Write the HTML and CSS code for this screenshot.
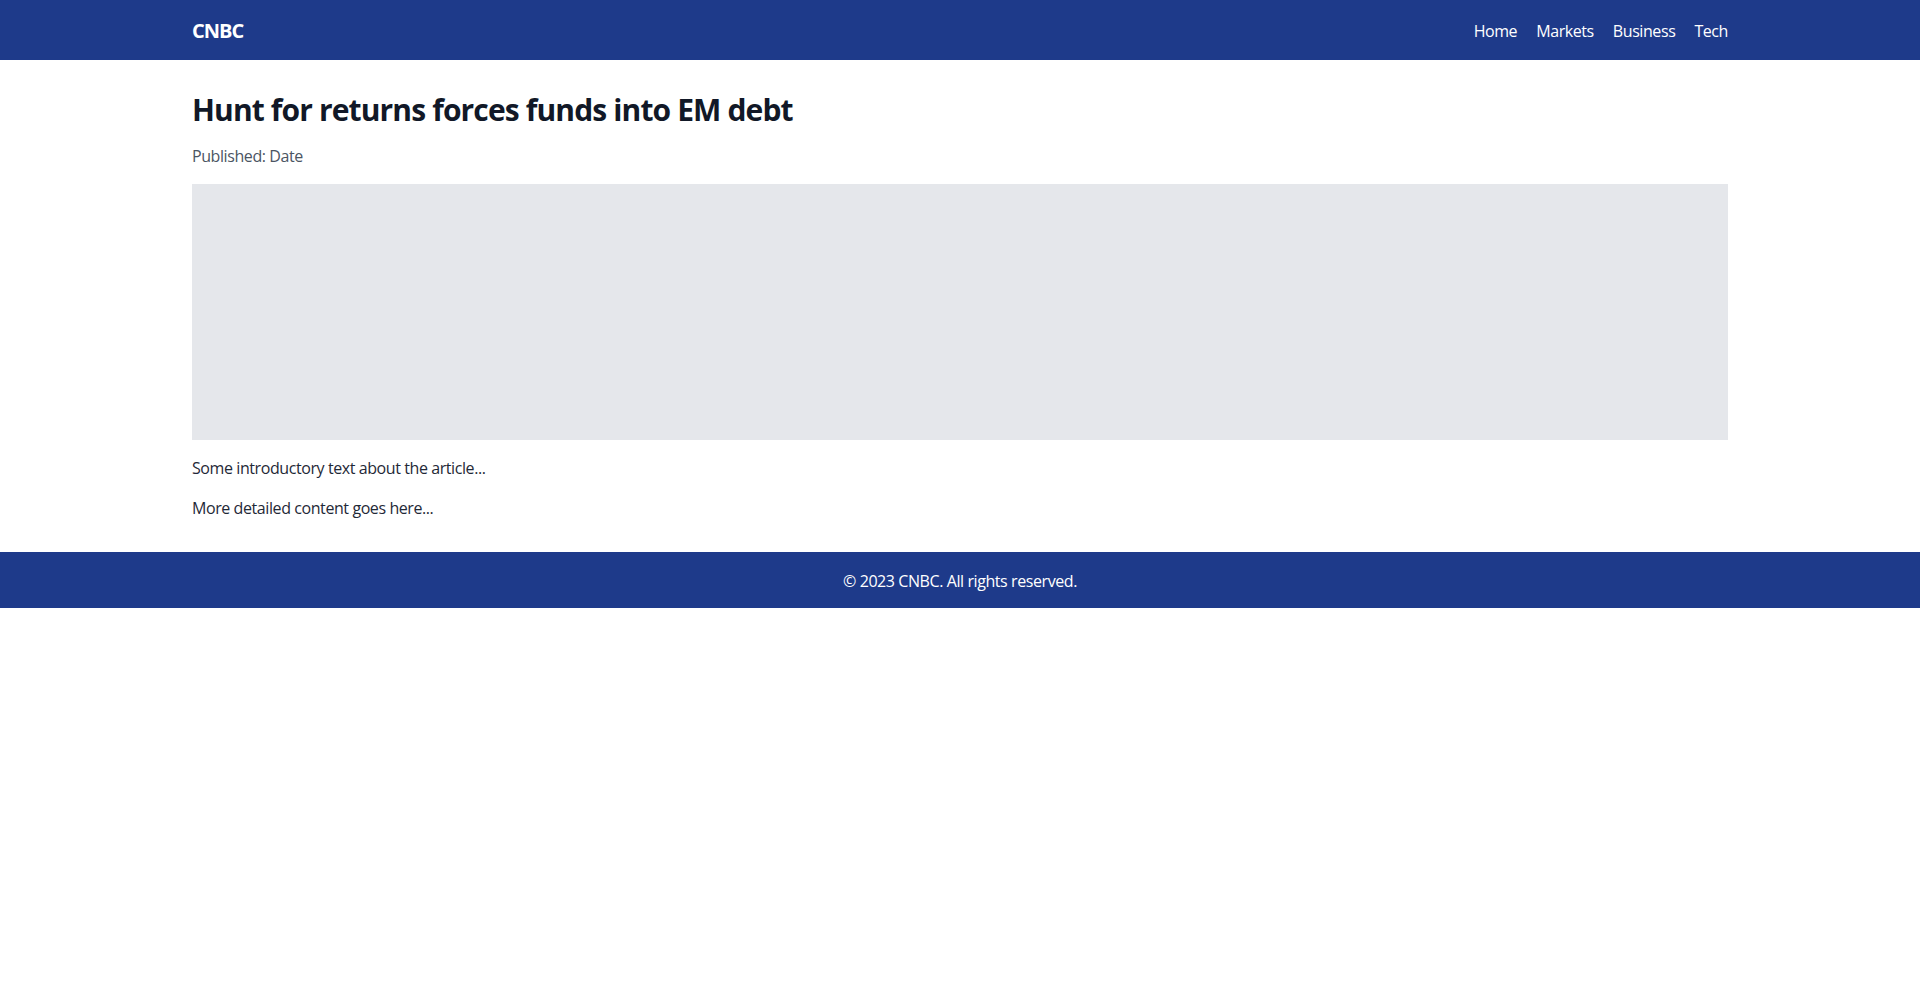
FILE: index.html
```html
<!DOCTYPE html>
<html lang="en">
<head>
<meta charset="utf-8">
<title>Hunt for returns forces funds into EM debt - CNBC</title>
<link rel="stylesheet" href="styles.css">
</head>
<body>
<header class="site-header">
  <div class="container header-inner">
    <a class="logo" href="#">CNBC</a>
    <nav class="nav">
      <a href="#">Home</a>
      <a href="#">Markets</a>
      <a href="#">Business</a>
      <a href="#">Tech</a>
    </nav>
  </div>
</header>
<main class="container main">
  <h1 class="title">Hunt for returns forces funds into EM debt</h1>
  <p class="meta">Published: Date</p>
  <div class="hero"></div>
  <div class="content">
    <p>Some introductory text about the article...</p>
    <p>More detailed content goes here...</p>
  </div>
</main>
<footer class="site-footer">
  <p>&copy; 2023 CNBC. All rights reserved.</p>
</footer>
</body>
</html>
```
FILE: styles.css
```css
* { box-sizing: border-box; }
html, body { margin: 0; padding: 0; }
body {
  font-family: "Segoe UI", "Open Sans", "Noto Sans", sans-serif;
  font-size: 16px;
  line-height: 24px;
  letter-spacing: -0.026em;
  color: #1f2937;
  background: #fff;
}
a { color: inherit; text-decoration: none; }
p { margin: 0; }
.container {
  max-width: 1536px;
  margin: 0 auto;
}
.site-header {
  background: #1e3a8a;
  color: #fff;
  padding: 17px 0 15px;
}
.header-inner {
  display: flex;
  justify-content: space-between;
  align-items: center;
}
.logo {
  font-size: 20px;
  line-height: 28px;
  font-weight: 700;
  letter-spacing: -0.05em;
}
.nav {
  display: flex;
  gap: 19px;
}
.main {
  padding: 32px 0;
}
.title {
  margin: 0 0 16px;
  font-size: 30px;
  line-height: 36px;
  font-weight: 700;
  letter-spacing: -0.029em;
  color: #111827;
}
.meta {
  color: #4b5563;
  margin-bottom: 16px;
}
.hero {
  height: 256px;
  background: #e5e7eb;
  margin-bottom: 16px;
}
.content {
  display: flex;
  flex-direction: column;
  gap: 16px;
}
.site-footer {
  background: #1e3a8a;
  color: #fff;
  padding: 17px 0 15px;
  text-align: center;
}
```
